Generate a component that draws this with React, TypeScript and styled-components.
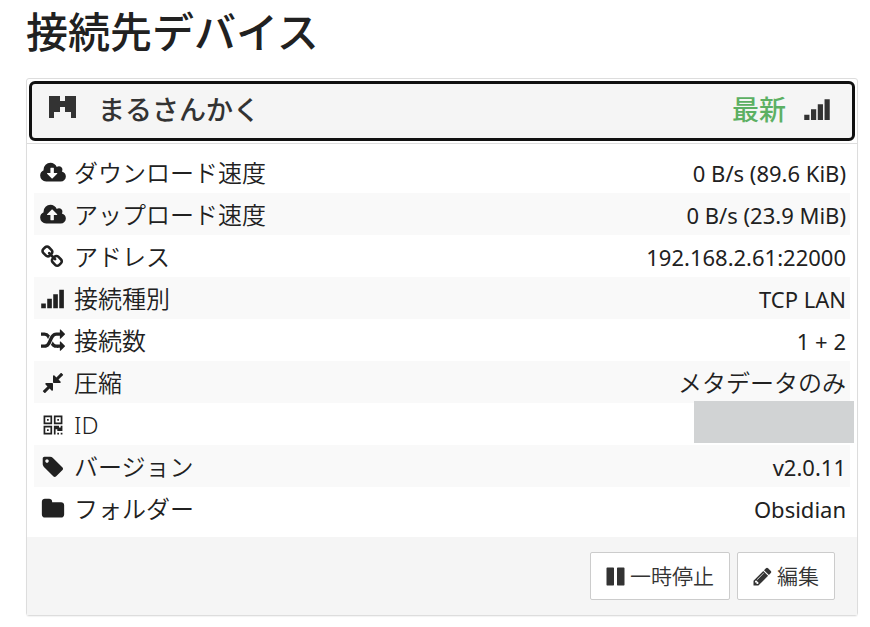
import React from "react";
import styled, { createGlobalStyle } from "styled-components";

const GlobalStyle = createGlobalStyle`
  * { box-sizing: border-box; }
  body {
    margin: 0;
    background: #fff;
    color: #212121;
    font-family: "Noto Sans", "Noto Sans CJK JP", sans-serif;
    font-size: 24px;
    line-height: 34px;
  }
`;

const Page = styled.main`
  padding: 4px 12px 11px 26px;
`;

const Title = styled.h3`
  margin: 0 0 18px;
  font-size: 42px;
  font-weight: 500;
  line-height: 56px;
`;

const Panel = styled.section`
  border: 1px solid #ddd;
  border-radius: 3px;
  box-shadow: 0 1px 1px rgba(0, 0, 0, 0.05);
`;

const Heading = styled.div`
  padding: 2px;
  border-bottom: 1px solid #ddd;
`;

const HeadingButton = styled.button`
  display: flex;
  align-items: center;
  width: 100%;
  height: 60px;
  padding: 0 21px 3px 17px;
  border: 3px solid #101010;
  border-radius: 6px;
  background: #f5f5f5;
  color: #333;
  font: inherit;
  font-size: 27px;
  font-weight: 500;
  text-align: left;
`;

const DeviceName = styled.span`
  flex: 1;
  margin-left: 22px;
`;

const Status = styled.span`
  margin-right: 18px;
  color: #5cb063;
`;

const Body = styled.div`
  padding: 7px 7px 8px;
`;

const Details = styled.table`
  width: 100%;
  border-collapse: collapse;
`;

const Row = styled.tr`
  height: 42px;
  &:nth-child(even) { background: #f9f9f9; }
`;

const Label = styled.th`
  padding: 2px 0 0 3px;
  font-weight: 350;
  text-align: left;
`;

const LabelContent = styled.span`
  display: flex;
  align-items: center;
  gap: 6px;
`;

const IconSlot = styled.span`
  display: flex;
  justify-content: center;
  width: 31px;
`;

const Value = styled.td<{ $latin?: boolean }>`
  position: relative;
  padding: 2px 4px 0;
  font-size: ${(p) => (p.$latin ? 22 : 24)}px;
  font-weight: ${(p) => (p.$latin ? 400 : 350)};
  text-align: right;
`;

const Redaction = styled.span`
  position: absolute;
  top: -2px;
  right: -4px;
  width: 160px;
  height: 42px;
  background: #d1d3d4;
`;

const Footer = styled.footer`
  display: flex;
  justify-content: flex-end;
  gap: 7px;
  padding: 15px 22px;
  background: #f5f5f5;
`;

const Action = styled.button`
  display: flex;
  align-items: center;
  gap: 4px;
  height: 48px;
  padding: 0 15px 0 14px;
  border: 1px solid #ccc;
  border-radius: 2px;
  background: #fff;
  color: #333;
  font: inherit;
  font-size: 21px;
  font-weight: 350;
`;

const Glyph = styled.svg`
  display: block;
  flex: none;
  fill: currentColor;
`;

const CLOUD =
  "m640 288q0 159-112.5 271.5t-271.5 112.5h-1088q-185 0-316.5-131.5t-131.5-316.5q0-130 70-240t188-165q-2-30-2-43 0-212 150-362t362-150q156 0 285.5 87t188.5 231q71-62 166-62 106 0 181 75t75 181q0 76-41 138 130 31 213.5 135.5t83.5 238.5z";

const PATHS = {
  download:
    "M1280 928q0-14-9-23t-23-9h-224v-352q0-13-9.5-22.5t-22.5-9.5h-192q-13 0-22.5 9.5t-9.5 22.5v352h-224q-13 0-22.5 9.5t-9.5 22.5q0 14 9 23l352 352q9 9 23 9t23-9l351-351q10-12 10-24z" +
    CLOUD.replace("m640 288", "m640 224"),
  upload:
    "M1280 864q0-14-9-23l-352-352q-9-9-23-9t-23 9l-351 351q-10 12-10 24 0 14 9 23t23 9h224v352q0 13 9.5 22.5t22.5 9.5h192q13 0 22.5-9.5t9.5-22.5v-352h224q13 0 22.5-9.5t9.5-22.5z" +
    CLOUD,
  link: "M1456 1216q0-40-28-68l-208-208q-28-28-68-28-42 0-72 32 3 3 19 18.5t21.5 21.5 15 19 13 25.5 3.5 27.5q0 40-28 68t-68 28q-15 0-27.5-3.5t-25.5-13-19-15-21.5-21.5-18.5-19q-33 31-33 73 0 40 28 68l206 207q27 27 68 27 40 0 68-26l147-146q28-28 28-67zm-703-705q0-40-28-68l-206-207q-28-28-68-28-39 0-68 27l-147 146q-28 28-28 67 0 40 28 68l208 208q27 27 68 27 42 0 72-31-3-3-19-18.5t-21.5-21.5-15-19-13-25.5-3.5-27.5q0-40 28-68t68-28q15 0 27.5 3.5t25.5 13 19 15 21.5 21.5 18.5 19q33-31 33-73zm895 705q0 120-85 203l-147 146q-83 83-203 83-121 0-204-85l-206-207q-83-83-83-203 0-123 88-209l-88-88q-86 88-208 88-120 0-204-84l-208-208q-84-84-84-204t85-203l147-146q83-83 203-83 121 0 204 85l206 207q83 83 83 203 0 123-88 209l88 88q86-88 208-88 120 0 204 84l208 208q84 84 84 204z",
  signal:
    "M16 1240h345v345h-345zM465 885h345v700h-345zM914 550h345v1035h-345zM1363 210h345v1375h-345z",
  random:
    "M666 481q-60 92-137 273-22-45-37-72.5t-40.5-63.5-51-56.5-63-35-81.5-14.5h-224q-14 0-23-9t-9-23v-192q0-14 9-23t23-9h224q250 0 410 225zm1126 799q0 14-9 23l-320 320q-9 9-23 9-13 0-22.5-9.5t-9.5-22.5v-192q-32 0-85 .5t-81 1-73-1-71-5-64-10.5-63-18.5-58-28.5-59-40-55-53.5-56-69.5q59-93 136-273 22 45 37 72.5t40.5 63.5 51 56.5 63 35 81.5 14.5h256v-192q0-14 9-23t23-9q12 0 24 10l319 319q9 9 9 23zm0-896q0 14-9 23l-320 320q-9 9-23 9-13 0-22.5-9.5t-9.5-22.5v-192h-256q-48 0-87 15t-69 45-51 61.5-45 77.5q-32 62-78 171-29 66-49.5 111t-54 105-64 100-74 83-90 68.5-106.5 42-128 16.5h-224q-14 0-23-9t-9-23v-192q0-14 9-23t23-9h224q48 0 87-15t69-45 51-61.5 45-77.5q32-62 78-171 29-66 49.5-111t54-105 64-100 74-83 90-68.5 106.5-42 128-16.5h256v-192q0-14 9-23t23-9q12 0 24 10l319 319q9 9 9 23z",
  compress:
    "M896 960v448q0 26-19 45t-45 19-45-19l-144-144-332 332q-10 10-23 10t-23-10l-114-114q-10-10-10-23t10-23l332-332-144-144q-19-19-19-45t19-45 45-19h448q26 0 45 19t19 45zm755-672q0 13-10 23l-332 332 144 144q19 19 19 45t-19 45-45 19h-448q-26 0-45-19t-19-45v-448q0-26 19-45t45-19 45 19l144 144 332-332q10-10 23-10t23 10l114 114q10 10 10 23z",
  qrcode:
    "M192 192h640v640h-640zM320 320v384h384v-384zM448 448h128v128h-128zM960 192h640v640h-640zM1088 320v384h384v-384zM1216 448h128v128h-128zM192 960h640v640h-640zM320 1088v384h384v-384zM448 1216h128v128h-128zM1600 960v384h-384v-128h-128v384h-128v-640h384v128h128v-128zM1216 1472h128v128h-128zM1472 1472h128v128h-128z",
  tag: "M576 448q0-53-37.5-90.5t-90.5-37.5-90.5 37.5-37.5 90.5 37.5 90.5 90.5 37.5 90.5-37.5 37.5-90.5zm1067 576q0 53-37 90l-491 492q-39 37-91 37-53 0-90-37l-715-716q-38-37-64.5-101t-26.5-117v-416q0-52 38-90t90-38h416q53 0 117 26.5t102 64.5l715 714q37 39 37 91z",
  folder:
    "M1728 608v704q0 92-66 158t-158 66h-1216q-92 0-158-66t-66-158v-960q0-92 66-158t158-66h320q92 0 158 66t66 158v32h672q92 0 158 66t66 158z",
  pause:
    "M1664 192v1408q0 26-19 45t-45 19h-512q-26 0-45-19t-19-45v-1408q0-26 19-45t45-19h512q26 0 45 19t19 45zm-896 0v1408q0 26-19 45t-45 19h-512q-26 0-45-19t-19-45v-1408q0-26 19-45t45-19h512q26 0 45 19t19 45z",
  pencil:
    "M491 1536l91-91-235-235-91 91v107h128v128h107zm523-928q0-22-22-22-10 0-17 7l-542 542q-7 7-7 17 0 22 22 22 10 0 17-7l542-542q7-7 7-17zm-54-192l416 416-832 832h-416v-416zm683 96q0 53-37 90l-166 166-416-416 166-165q36-38 90-38 53 0 91 38l235 234q37 39 37 91z",
};

type IconName = keyof typeof PATHS;

function Icon({ name, size = 24 }: { name: IconName; size?: number }) {
  const wide = name === "download" || name === "upload";
  return (
    <Glyph
      width={wide ? size + 2 : size}
      height={size}
      viewBox={wide ? "0 0 1920 1792" : "0 0 1792 1792"}
      fillRule="evenodd"
      aria-hidden="true"
    >
      <path d={PATHS[name]} />
    </Glyph>
  );
}

function Identicon() {
  return (
    <Glyph width={27} height={27} viewBox="0 0 5 5" shapeRendering="crispEdges" aria-hidden="true">
      <path d="M0 0h2v1h1v-1h2v4h-1v-1h-1v-1h-1v1h-1v1h-1z" />
    </Glyph>
  );
}

const rows: { icon: IconName; label: string; value?: string; latin?: boolean }[] = [
  { icon: "download", label: "ダウンロード速度", value: "0 B/s (89.6 KiB)", latin: true },
  { icon: "upload", label: "アップロード速度", value: "0 B/s (23.9 MiB)", latin: true },
  { icon: "link", label: "アドレス", value: "192.168.2.61:22000", latin: true },
  { icon: "signal", label: "接続種別", value: "TCP LAN", latin: true },
  { icon: "random", label: "接続数", value: "1 + 2", latin: true },
  { icon: "compress", label: "圧縮", value: "メタデータのみ" },
  { icon: "qrcode", label: "ID" },
  { icon: "tag", label: "バージョン", value: "v2.0.11", latin: true },
  { icon: "folder", label: "フォルダー", value: "Obsidian", latin: true },
];

export default function App() {
  return (
    <Page lang="ja">
      <GlobalStyle />
      <Title>接続先デバイス</Title>
      <Panel>
        <Heading>
          <HeadingButton type="button" aria-expanded="true">
            <Identicon />
            <DeviceName>まるさんかく</DeviceName>
            <Status>最新</Status>
            <Icon name="signal" size={27} />
          </HeadingButton>
        </Heading>
        <Body>
          <Details>
            <tbody>
              {rows.map((row) => (
                <Row key={row.label}>
                  <Label scope="row">
                    <LabelContent>
                      <IconSlot>
                        <Icon name={row.icon} />
                      </IconSlot>
                      {row.label}
                    </LabelContent>
                  </Label>
                  <Value $latin={row.latin}>{row.value ?? <Redaction />}</Value>
                </Row>
              ))}
            </tbody>
          </Details>
        </Body>
        <Footer>
          <Action type="button">
            <Icon name="pause" size={21} />
            一時停止
          </Action>
          <Action type="button">
            <Icon name="pencil" size={21} />
            編集
          </Action>
        </Footer>
      </Panel>
    </Page>
  );
}
